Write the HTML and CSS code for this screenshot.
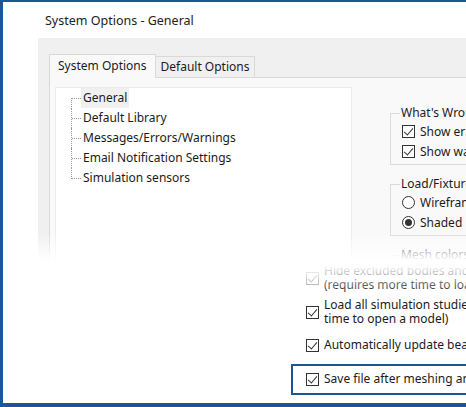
FILE: index.html
```html
<!DOCTYPE html>
<html lang="en">
<head>
    <meta charset="UTF-8">
    <title>System Options - General</title>
    <link rel="stylesheet" href="styles.css">
</head>
<body>
    <div class="frame">
        <div class="title">System Options - General</div>

        <div class="dialog">
            <div class="tabs">
                <div class="tab active">System Options</div>
                <div class="tab">Default Options</div>
            </div>
            <div class="page">
                <ul class="tree">
                    <li class="selected"><span>General</span></li>
                    <li><span>Default Library</span></li>
                    <li><span>Messages/Errors/Warnings</span></li>
                    <li><span>Email Notification Settings</span></li>
                    <li class="last"><span>Simulation sensors</span></li>
                </ul>
                <div class="options">
                    <fieldset class="group">
                        <legend>What's Wrong</legend>
                        <div class="opt"><span class="box checked"></span>Show errors</div>
                        <div class="opt"><span class="box checked"></span>Show warnings</div>
                    </fieldset>
                    <fieldset class="group">
                        <legend>Load/Fixture symbols</legend>
                        <div class="opt"><span class="radio"></span>Wireframe</div>
                        <div class="opt"><span class="radio on"></span>Shaded</div>
                    </fieldset>
                    <fieldset class="group faint">
                        <legend>Mesh colors</legend>
                    </fieldset>
                </div>
            </div>
        </div>

        <div class="lower">
            <div class="opt multi"><span class="box checked dim"></span>Hide excluded bodies and parts in study<br>(requires more time to load a model)</div>
            <div class="opt multi spaced"><span class="box checked"></span>Load all simulation studies when opening a model (requires more<br>time to open a model)</div>
            <div class="opt wide"><span class="box checked"></span>Automatically update beam joints</div>
            <div class="opt focus"><span class="box checked"></span>Save file after meshing and analysis</div>
        </div>

        <div class="fade"></div>
    </div>
</body>
</html>
```

FILE: styles.css
```css
* {
    margin: 0;
    padding: 0;
    box-sizing: border-box;
}
body {
    background-color: #ffffff;
    font-family: "Noto Sans", "Open Sans", sans-serif;
    font-size: 12px;
    color: #1b1b1b;
}
.frame {
    position: relative;
    width: 466px;
    height: 407px;
    overflow: hidden;
    background-color: #ffffff;
    border-left: 3px solid #1b5796;
    border-top: 2px solid #1b5796;
    border-bottom: 4px solid #1b5796;
    white-space: nowrap;
}
.title {
    height: 36px;
    padding: 10px 0 0 42px;
    font-size: 12.5px;
    color: #222222;
}
.dialog {
    height: 224px;
    margin-left: 35px;
    padding: 17px 0 0 11px;
    background-color: #f0f0f0;
    display: flex;
    flex-direction: column;
    overflow: hidden;
}
.tabs {
    display: flex;
    align-items: flex-end;
    height: 23px;
    border-bottom: 1px solid #d9d9d9;
}
.tab {
    height: 21px;
    padding: 0 5px;
    line-height: 19px;
    background-color: #f0f0f0;
    border: 1px solid #d9d9d9;
    border-bottom: none;
}
.tab.active {
    height: 24px;
    margin-bottom: -1px;
    padding: 0 8px;
    line-height: 22px;
    background-color: #f9f9f9;
    position: relative;
}
.tab + .tab {
    border-left: none;
}
.page {
    flex: 1;
    display: flex;
    padding: 9px 0 0 5px;
    background-color: #f9f9f9;
    border-left: 1px solid #d9d9d9;
}
.tree {
    flex: none;
    width: 297px;
    list-style: none;
    padding: 0 0 0 15px;
    background-color: #ffffff;
    border: 1px solid #ececec;
    border-bottom: none;
}
.tree li {
    position: relative;
    height: 20px;
    line-height: 20px;
    padding-left: 11px;
    border-left: 1px dotted #9a9a9a;
}
.tree li::before {
    content: "";
    position: absolute;
    left: 0;
    top: 10px;
    width: 9px;
    border-top: 1px dotted #9a9a9a;
}
.tree li:first-child {
    border-left: none;
    margin-left: 1px;
}
.tree li:first-child::before {
    left: -1px;
    height: 10px;
    border-left: 1px dotted #9a9a9a;
}
.tree li.last {
    border-left: none;
    margin-left: 1px;
}
.tree li.last::before {
    left: -1px;
    top: 0;
    height: 10px;
    border-left: 1px dotted #9a9a9a;
    border-bottom: 1px dotted #9a9a9a;
    border-top: none;
}
.tree li span {
    display: inline-block;
    padding: 0 2px;
    margin-left: -2px;
}
.tree li.selected span {
    background-color: #f0f0f0;
}
.options {
    flex: none;
    padding: 18px 0 0 38px;
    display: flex;
    flex-direction: column;
    gap: 11px;
}
.group {
    width: 120px;
    border: 1px solid #dadada;
    border-right: none;
    padding: 0 0 3px 11px;
}
.group legend {
    margin-left: -2px;
    padding: 0 1px;
    line-height: 16px;
}
.group.faint {
    height: 20px;
    border-color: #e4e4e4;
}
.opt {
    display: flex;
    align-items: center;
    gap: 5px;
    height: 20px;
}
.box {
    flex: none;
    width: 13px;
    height: 13px;
    border: 1px solid #333333;
    background-color: #ffffff;
    position: relative;
}
.box.checked::after {
    content: "";
    position: absolute;
    left: 3px;
    top: 0px;
    width: 4px;
    height: 8px;
    border-right: 1.2px solid #333333;
    border-bottom: 1.2px solid #333333;
    transform: rotate(40deg);
}
.box.dim {
    border-color: #9a9a9a;
}
.box.dim::after {
    border-color: #9a9a9a;
}
.radio {
    flex: none;
    width: 13px;
    height: 13px;
    border: 1px solid #333333;
    border-radius: 50%;
    background-color: #ffffff;
    position: relative;
}
.radio.on::after {
    content: "";
    position: absolute;
    left: 2px;
    top: 2px;
    width: 7px;
    height: 7px;
    border-radius: 50%;
    background-color: #333333;
}
.lower {
    padding: 2px 0 0 303px;
}
.lower .opt {
    height: auto;
    line-height: 14px;
}
.lower .spaced {
    margin-top: 6px;
}
.lower .wide {
    margin-top: 12px;
    height: 14px;
}
.lower .focus {
    margin: 12px 0 0 -15px;
    padding: 6px 0 7px 13px;
    border: 2px solid #1b5796;
    border-right: none;
}
.fade {
    position: absolute;
    left: 0;
    right: 0;
    top: 230px;
    height: 62px;
    background: linear-gradient(to bottom, rgba(255, 255, 255, 0) 0%, #ffffff 46%, #ffffff 54%, rgba(255, 255, 255, 0) 100%);
}
```
